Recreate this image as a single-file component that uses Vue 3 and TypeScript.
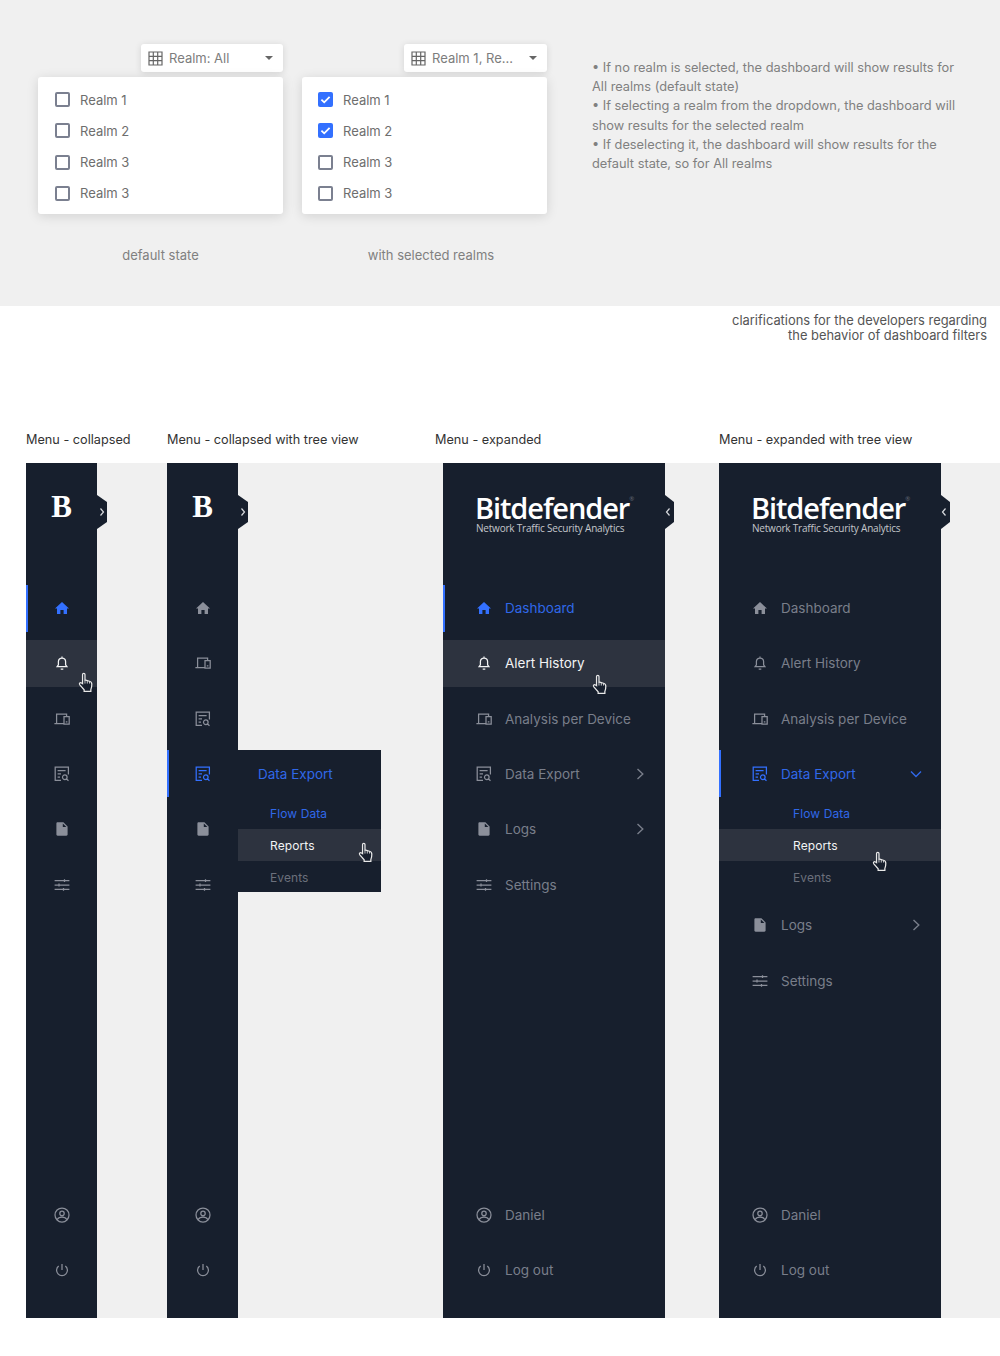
<script setup lang="ts">
interface IconDef {
  solid: boolean;
  d: string;
}

interface MenuItem {
  id: string;
  label: string;
  icon: string;
  arrow?: boolean;
}

interface MenuConfig {
  id: string;
  expanded: boolean;
  active: string;
  hover?: string;
  tree?: boolean;
  items: string[];
  hand: { left: number; top: number };
}

const icons: Record<string, IconDef> = {
  home: { solid: true, d: "M8 2 15 8.6H13V14H9.6V10H6.4V14H3V8.6H1Z" },
  bell: { solid: false, d: "M8 3a3.6 3.6 0 0 1 3.6 3.6v3.2l1.3 1.8H3.1l1.3-1.8V6.6A3.6 3.6 0 0 1 8 3ZM8 1.4V3M6.7 14h2.6" },
  devices: { solid: false, d: "M2.6 12V3H12.6V5.4M.4 12.6H9.4M10 5.6h5.2v7.4H10zM11.8 10.8h1.6" },
  report: { solid: false, d: "M7 14.3H1.2V1.2h13.2v7.4M3.6 4.6h8M3.6 7.8H7M3.6 11H6M10.8 8.9a2.3 2.3 0 1 0 0 4.6 2.3 2.3 0 0 0 0-4.6ZM12.5 13.1l2 1.7" },
  file: { solid: true, d: "M3.6 1.2h5.8l4.2 4.2v8.2c0 .7-.5 1.2-1.2 1.2H3.6c-.7 0-1.2-.5-1.2-1.2V2.4c0-.7.5-1.2 1.2-1.2ZM8.8 2.4v3.6h3.6Z" },
  sliders: { solid: false, d: "M.6 3.6h14.8M.6 8h14.8M.6 12.4h14.8M10.5 2.2v2.8M5 6.6v2.8M9.5 11v2.8" },
  user: { solid: false, d: "M8 1a7 7 0 1 0 0 14A7 7 0 0 0 8 1ZM8 4.2a2.2 2.2 0 1 0 0 4.4 2.2 2.2 0 0 0 0-4.4ZM3.4 12.4C4 10.8 5.8 10 8 10s4 .8 4.6 2.4" },
  power: { solid: false, d: "M8 2v6M4.7 3.9a5.4 5.4 0 1 0 6.6 0" },
};

const mainItems: Record<string, MenuItem> = {
  dashboard: { id: "dashboard", label: "Dashboard", icon: "home" },
  alerts: { id: "alerts", label: "Alert History", icon: "bell" },
  analysis: { id: "analysis", label: "Analysis per Device", icon: "devices" },
  reportsLink: { id: "reportsLink", label: "Reports", icon: "report" },
  exportData: { id: "exportData", label: "Data Export", icon: "report", arrow: true },
  logs: { id: "logs", label: "Logs", icon: "file", arrow: true },
  settings: { id: "settings", label: "Settings", icon: "sliders" },
};

const footerItems: MenuItem[] = [
  { id: "daniel", label: "Daniel", icon: "user" },
  { id: "logout", label: "Log out", icon: "power" },
];

const subItems = ["Flow Data", "Reports", "Events"];
const realms = ["Realm 1", "Realm 2", "Realm 3", "Realm 3"];

const filters = [
  { id: "default", title: "Realm: All", caption: "default state", checked: [] as number[] },
  { id: "selected", title: "Realm 1, Re...", caption: "with selected realms", checked: [0, 1] },
];

const menus: MenuConfig[] = [
  {
    id: "collapsed",
    expanded: false,
    active: "dashboard",
    hover: "alerts",
    items: ["dashboard", "alerts", "analysis", "exportData", "logs", "settings"],
    hand: { left: 52, top: 209 },
  },
  {
    id: "collapsed-tree",
    expanded: false,
    active: "exportData",
    tree: true,
    items: ["dashboard", "analysis", "reportsLink", "exportData", "logs", "settings"],
    hand: { left: 191, top: 379 },
  },
  {
    id: "expanded",
    expanded: true,
    active: "dashboard",
    hover: "alerts",
    items: ["dashboard", "alerts", "analysis", "exportData", "logs", "settings"],
    hand: { left: 149, top: 211 },
  },
  {
    id: "expanded-tree",
    expanded: true,
    active: "exportData",
    tree: true,
    items: ["dashboard", "alerts", "analysis", "exportData", "logs", "settings"],
    hand: { left: 153, top: 388 },
  },
];

const menuLabels = ["Menu - collapsed", "Menu - collapsed with tree view", "Menu - expanded", "Menu - expanded with tree view"];
</script>

<template>
  <div class="page">
    <section class="filters">
      <div v-for="filter in filters" :key="filter.id" class="filter" :class="filter.id">
        <div class="select">
          <svg class="grid-icon" viewBox="0 0 15 15">
            <path d="M1 1h13v13H1zM5.3 1v13M9.7 1v13M1 5.3h13M1 9.7h13" />
          </svg>
          <span class="select-title">{{ filter.title }}</span>
          <span class="caret"></span>
        </div>
        <ul class="options">
          <li v-for="(realm, i) in realms" :key="i" class="option">
            <span class="box" :class="{ checked: filter.checked.includes(i) }">
              <svg v-if="filter.checked.includes(i)" viewBox="0 0 15 15">
                <path d="M3.4 7.6 6.2 10.3 11.6 4.8" />
              </svg>
            </span>
            {{ realm }}
          </li>
        </ul>
        <p class="filter-caption">{{ filter.caption }}</p>
      </div>
      <div class="notes">
        <p>• If no realm is selected, the dashboard will show results for All realms (default state)</p>
        <p>• If selecting a realm from the dropdown, the dashboard will show results for the selected realm</p>
        <p>• If deselecting it, the dashboard will show results for the default state, so for All realms</p>
      </div>
    </section>

    <p class="clarify">clarifications for the developers regarding<br />the behavior of dashboard filters</p>

    <div class="menu-labels">
      <span v-for="label in menuLabels" :key="label">{{ label }}</span>
    </div>

    <section class="canvas">
      <aside v-for="menu in menus" :key="menu.id" class="sidebar" :class="[menu.id, { wide: menu.expanded }]">
        <div class="brand">
          <template v-if="menu.expanded">
            <div class="logo">Bitdefender<sup>®</sup></div>
            <div class="tagline">Network Traffic Security Analytics</div>
          </template>
          <div v-else class="logo-b">B</div>
        </div>

        <span class="toggle">
          <svg viewBox="0 0 8 10">
            <path :d="menu.expanded ? 'M5.5 1.5 2.5 5 5.5 8.5' : 'M2.5 1.5 5.5 5 2.5 8.5'" />
          </svg>
        </span>

        <nav class="nav">
          <div v-for="key in menu.items" :key="key" class="nav-group">
            <div
              class="nav-item"
              :class="{ active: menu.active === key, hover: menu.hover === key }"
            >
              <svg class="icon" :class="{ solid: icons[mainItems[key].icon].solid }" viewBox="0 0 16 16">
                <path :d="icons[mainItems[key].icon].d" />
              </svg>
              <template v-if="menu.expanded">
                <span class="nav-label">{{ mainItems[key].label }}</span>
                <svg v-if="mainItems[key].arrow" class="arrow" viewBox="0 0 12 12">
                  <path :d="menu.tree && menu.active === key ? 'M1 3.5 6 8.5 11 3.5' : 'M3.5 1 8.8 6 3.5 11'" />
                </svg>
              </template>
            </div>
            <ul v-if="menu.expanded && menu.tree && menu.active === key" class="sub-list">
              <li
                v-for="(sub, i) in subItems"
                :key="sub"
                class="sub-item"
                :class="{ current: i === 0, hover: i === 1, dim: i === 2 }"
              >
                {{ sub }}
              </li>
            </ul>
            <div v-if="!menu.expanded && menu.tree && menu.active === key" class="flyout">
              <div class="flyout-title">{{ mainItems[key].label }}</div>
              <ul class="fly-list">
                <li
                  v-for="(sub, i) in subItems"
                  :key="sub"
                  class="sub-item"
                  :class="{ current: i === 0, hover: i === 1, dim: i === 2 }"
                >
                  {{ sub }}
                </li>
              </ul>
            </div>
          </div>
        </nav>

        <div class="nav footer">
          <div v-for="item in footerItems" :key="item.id" class="nav-item">
            <svg class="icon" viewBox="0 0 16 16">
              <path :d="icons[item.icon].d" />
            </svg>
            <span v-if="menu.expanded" class="nav-label">{{ item.label }}</span>
          </div>
        </div>

        <svg
          class="hand"
          viewBox="0 0 14 20"
          :style="{ left: menu.hand.left + 'px', top: menu.hand.top + 'px' }"
        >
          <path d="M4.2 11V2.4c0-1.6 2.3-1.6 2.3 0v5.2l4.3 1.2c1.4.4 2.2 1.2 2.2 2.8 0 2-.2 3.6-.9 5v1.9H5.7v-1.6L1.6 12.2c-1-1.2.4-2.8 1.6-1.8Z" />
          <path d="M6.5 7.6V11M8.7 8.2V11M10.8 8.8V11" />
        </svg>
      </aside>
    </section>
  </div>
</template>

<style>
html,
body {
  margin: 0;
  background: #fff;
}
</style>

<style scoped>
* {
  box-sizing: border-box;
}

.page {
  width: 1000px;
  height: 1356px;
  overflow: hidden;
  font-family: Inter, "Open Sans", "Liberation Sans", sans-serif;
  font-size: 13px;
}

p,
ul {
  margin: 0;
  padding: 0;
  list-style: none;
}

.filters {
  height: 306px;
  background: #f0f0f0;
  padding: 44px 0 0 38px;
  display: flex;
}

.filter {
  width: 245px;
  margin-right: 19px;
  display: flex;
  flex-direction: column;
  align-items: flex-end;
}

.select {
  width: 142px;
  height: 28px;
  background: #fff;
  border-radius: 3px;
  box-shadow: 0 1px 7px rgba(0, 0, 0, 0.12);
  display: flex;
  align-items: center;
  padding: 0 10px 0 7px;
  color: #7d7d7d;
  font-size: 13px;
}

.filter.selected .select {
  width: 143px;
}

.grid-icon {
  width: 15px;
  height: 15px;
  flex: none;
  fill: none;
  stroke: #666;
  stroke-width: 1.2;
}

.select-title {
  margin-left: 6px;
  flex: 1;
  white-space: nowrap;
}

.caret {
  width: 0;
  height: 0;
  border-left: 4px solid transparent;
  border-right: 4px solid transparent;
  border-top: 4px solid #666;
}

.options {
  width: 245px;
  height: 137px;
  margin-top: 5px;
  background: #fff;
  border-radius: 3px;
  box-shadow: 0 2px 12px rgba(0, 0, 0, 0.13);
  padding: 7px 0 5px 17px;
  display: flex;
  flex-direction: column;
  justify-content: space-between;
}

.filter.selected .options {
  padding-left: 16px;
}

.option {
  height: 31px;
  display: flex;
  align-items: center;
  gap: 10px;
  color: #6e6e6e;
}

.box {
  width: 15px;
  height: 15px;
  border: 2px solid #7b8090;
  border-radius: 2px;
  background: #fff;
  position: relative;
}

.box.checked {
  border: 0;
  background: #3370ff;
}

.box svg {
  display: block;
  width: 15px;
  height: 15px;
  fill: none;
  stroke: #fff;
  stroke-width: 1.8;
}

.filter-caption {
  width: 100%;
  margin-top: 33px;
  text-align: center;
  color: #808080;
}

.filter.selected .filter-caption {
  padding-left: 13px;
}

.notes {
  width: 378px;
  margin: 14px 0 0 26px;
  color: #808080;
  font-size: 12.8px;
  line-height: 19.2px;
}

.clarify {
  width: 987px;
  height: 126px;
  padding-top: 7px;
  text-align: right;
  color: #555;
  font-size: 12.9px;
  line-height: 15px;
}

.menu-labels {
  height: 31px;
  padding-left: 26px;
  display: grid;
  grid-template-columns: 141px 268px 284px 1fr;
  color: #333;
  font-size: 12.7px;
  line-height: 16px;
}

.canvas {
  margin-left: 26px;
  height: 855px;
  background: #f0f0f0;
  display: flex;
}

.sidebar {
  width: 71px;
  height: 855px;
  flex: none;
  position: relative;
  background: #171f2d;
  display: flex;
  flex-direction: column;
  color: #797e8a;
}

.sidebar.wide {
  width: 222px;
}

.sidebar.collapsed-tree {
  margin-left: 70px;
}

.sidebar.expanded {
  margin-left: 205px;
}

.sidebar.expanded-tree {
  margin-left: 54px;
}

.brand {
  height: 121.5px;
  color: #fff;
}

.logo-b {
  padding-top: 24px;
  text-align: center;
  font-family: "Liberation Serif", serif;
  font-weight: 700;
  font-size: 31px;
  line-height: 40px;
}

.logo {
  padding: 31px 0 0 32px;
  font-family: "Open Sans", sans-serif;
  font-weight: 600;
  font-size: 29px;
  line-height: 28px;
  letter-spacing: -1.1px;
  white-space: nowrap;
}

.logo sup {
  font-size: 6px;
  font-weight: 400;
  letter-spacing: 0;
  color: #666c78;
  vertical-align: 18px;
  line-height: 0;
}

.tagline {
  padding-left: 33px;
  font-family: "Open Sans", sans-serif;
  font-size: 10px;
  line-height: 13px;
  letter-spacing: -0.2px;
  color: #c4c6cb;
  white-space: nowrap;
}

.toggle {
  position: absolute;
  left: 100%;
  top: 32px;
  width: 10px;
  height: 34px;
  background: #171f2d;
  clip-path: polygon(0 0, 100% 7px, 100% 27px, 0 100%);
  display: flex;
  align-items: center;
  justify-content: center;
}

.wide .toggle {
  width: 9px;
}

.wide .toggle svg {
  margin-left: -3px;
}

.toggle svg {
  width: 8px;
  height: 10px;
  flex: none;
  fill: none;
  stroke: #d8dade;
  stroke-width: 1.2;
}

.nav {
  display: flex;
  flex-direction: column;
  gap: 8.33px;
}

.footer {
  margin-top: auto;
  padding-bottom: 24.5px;
}

.nav-item {
  height: 47px;
  display: flex;
  align-items: center;
  padding-left: 28px;
  font-size: 13.5px;
}

.wide .nav-item {
  padding-left: 33px;
}

.nav-item.active {
  color: #3068e8;
  box-shadow: inset 2px 0 0 #3370ff;
}

.nav-item.active .icon.solid {
  fill: #3370ff;
}

.nav-item.hover {
  background: #2d333f;
  color: #f2f3f4;
}

.icon {
  width: 16px;
  height: 16px;
  flex: none;
  fill: none;
  stroke: #8b8f9a;
  stroke-width: 1.25;
}

.nav-item.active .icon {
  stroke: #3370ff;
}

.nav-item.hover .icon {
  stroke: #f2f3f4;
}

.icon.solid,
.nav-item.active .icon.solid {
  stroke: none;
  fill-rule: evenodd;
}

.icon.solid {
  fill: #8b8f9a;
}

.nav-label {
  margin-left: 13px;
  white-space: nowrap;
  flex: 1;
}

.arrow {
  width: 12px;
  height: 12px;
  margin-right: 19px;
  fill: none;
  stroke: currentColor;
  stroke-width: 1.4;
}

.sub-item {
  height: 32px;
  display: flex;
  align-items: center;
  padding-left: 74px;
  font-size: 12px;
  letter-spacing: 0.1px;
}

.sub-item.current {
  color: #3068e8;
}

.sub-item.hover {
  background: #2d333f;
  color: #f2f3f4;
}

.sub-item.dim {
  color: #6b707c;
}

.flyout {
  position: absolute;
  left: 71px;
  top: 287px;
  width: 143px;
  height: 142px;
  background: #171f2d;
}

.flyout-title {
  height: 47px;
  padding-left: 20px;
  display: flex;
  align-items: center;
  color: #3068e8;
  font-size: 13.5px;
}

.fly-list .sub-item {
  padding-left: 32px;
}

.hand {
  position: absolute;
  width: 15px;
  height: 21px;
  fill: none;
}

.hand path:first-child {
  fill: #171f2d;
  stroke: #e8e8e8;
  stroke-width: 1.2;
}

.hand path:last-child {
  stroke: #e8e8e8;
  stroke-width: 0.8;
}
</style>
